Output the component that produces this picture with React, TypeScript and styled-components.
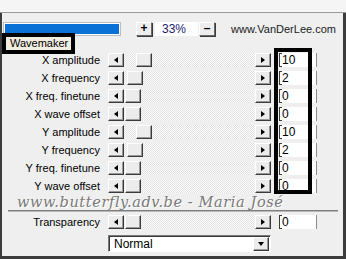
import styled, { createGlobalStyle } from "styled-components";

const GlobalStyle = createGlobalStyle`
  html, body {
    margin: 0;
    padding: 0;
    background: #f0f0f0;
  }
  body {
    font-family: "Liberation Sans", Arial, sans-serif;
    font-size: 11px;
    color: #000;
  }
`;

type Row = { label: string; value: string; thumb: number };

const rows: Row[] = [
  { label: "X amplitude", value: "10", thumb: 12 },
  { label: "X frequency", value: "2", thumb: 3 },
  { label: "X freq. finetune", value: "0", thumb: 1 },
  { label: "X wave offset", value: "0", thumb: 1 },
  { label: "Y amplitude", value: "10", thumb: 12 },
  { label: "Y frequency", value: "2", thumb: 3 },
  { label: "Y freq. finetune", value: "0", thumb: 1 },
  { label: "Y wave offset", value: "0", thumb: 1 },
];

const Slider = ({ thumb }: { thumb: number }) => (
  <SliderBox>
    <RaisedButton>
      <Arrow $dir="left" />
    </RaisedButton>
    <Track>
      <Thumb style={{ left: thumb }} />
    </Track>
    <RaisedButton>
      <Arrow $dir="right" />
    </RaisedButton>
  </SliderBox>
);

const App = () => {
  return (
    <Window>
      <GlobalStyle />
      <TopStrip />
      <Panel>
        <Toolbar>
          <Progress>
            <ProgressFill />
          </Progress>
          <SmallButton $ml={15}>+</SmallButton>
          <ZoomField>33%</ZoomField>
          <SmallButton $ml={1}>–</SmallButton>
          <SiteLink>www.VanDerLee.com</SiteLink>
        </Toolbar>

        <ParamGrid>
          {rows.map((r) => (
            <ParamRow key={r.label}>
              <Label>{r.label}</Label>
              <Slider thumb={r.thumb} />
              <ValueField>{r.value}</ValueField>
            </ParamRow>
          ))}
        </ParamGrid>

        <Signature>www.butterfly.adv.be - Maria José</Signature>
        <Separator />

        <ParamRow>
          <Label>Transparency</Label>
          <Slider thumb={1} />
          <ValueField>0</ValueField>
        </ParamRow>

        <SelectRow>
          <Select>
            <span>Normal</span>
            <SelectButton>
              <Arrow $dir="down" />
            </SelectButton>
          </Select>
        </SelectRow>

        <TabMarker>Wavemaker</TabMarker>
        <ValueMarker />
      </Panel>
    </Window>
  );
};

const Window = styled.div`
  width: 346px;
  height: 259px;
  display: flex;
  flex-direction: column;
  background: #f0f0f0;
  overflow: hidden;
`;

const TopStrip = styled.div`
  height: 12px;
  background: #f5f5f5;
  border-bottom: 1px solid #9a9a9a;
  flex-shrink: 0;
`;

const Panel = styled.div`
  position: relative;
  flex: 1;
  display: flex;
  flex-direction: column;
  border-left: 2px solid #3c3c3c;
  border-right: 3px solid #3c3c3c;
  border-bottom: 3px solid #3c3c3c;
  background: #efefef;
`;

const Toolbar = styled.div`
  height: 15px;
  margin-top: 8px;
  display: flex;
  align-items: center;
`;

const Progress = styled.div`
  width: 114px;
  height: 10px;
  margin-left: 1px;
  border: 1px solid #bdbdbd;
  padding: 1px;
  background: #fff;
  display: flex;
`;

const ProgressFill = styled.div`
  flex: 1;
  background: #0a72d6;
`;

const SmallButton = styled.div<{ $ml: number }>`
  width: 14px;
  height: 12px;
  margin-left: ${({ $ml }) => $ml}px;
  background: #ededed;
  border: 1px solid;
  border-color: #fff #6a6a6a #6a6a6a #fff;
  box-shadow: 1px 1px 0 #3a3a3a;
  font-size: 12px;
  font-weight: bold;
  line-height: 11px;
  text-align: center;
`;

const ZoomField = styled.div`
  width: 36px;
  height: 14px;
  background: #fff;
  padding-left: 7px;
  margin-left: 3px;
  font-size: 12px;
  line-height: 14px;
  color: #1c1c6a;
`;

const SiteLink = styled.div`
  margin-left: 16px;
  font-size: 11px;
  color: #1a1a1a;
`;

const ParamGrid = styled.div`
  margin-top: 15px;
  display: flex;
  flex-direction: column;
`;

const ParamRow = styled.div`
  height: 18px;
  display: grid;
  grid-template-columns: 98px 163px 38px;
  column-gap: 8px;
  align-items: center;
`;

const Label = styled.div`
  text-align: right;
  font-size: 11px;
  white-space: nowrap;
`;

const SliderBox = styled.div`
  height: 14px;
  display: flex;
`;

const RaisedButton = styled.div`
  width: 16px;
  height: 14px;
  box-sizing: border-box;
  background: #ececec;
  border: 1px solid;
  border-color: #fff #3a3a3a #3a3a3a #fff;
  box-shadow: inset -1px -1px 0 #9a9a9a;
  display: flex;
  align-items: center;
  justify-content: center;
`;

const Track = styled.div`
  position: relative;
  flex: 1;
  background: repeating-conic-gradient(#e4e4e4 0 25%, #fbfbfb 0 50%) 0 0 / 2px 2px;
`;

const Thumb = styled(RaisedButton)`
  position: absolute;
  top: 0;
`;

const Arrow = styled.span<{ $dir: "left" | "right" | "down" }>`
  width: 0;
  height: 0;
  border-style: solid;
  border-color: transparent;
  ${({ $dir }) =>
    $dir === "left"
      ? "border-width: 3.5px 4px 3.5px 0; border-right-color: #000;"
      : $dir === "right"
      ? "border-width: 3.5px 0 3.5px 4px; border-left-color: #000;"
      : "border-width: 4px 3.5px 0 3.5px; border-top-color: #000;"}
`;

const ValueField = styled.div`
  position: relative;
  height: 14px;
  box-sizing: border-box;
  background: #fff;
  border-left: 1px solid #3a3a3a;
  border-right: 1px solid #8a8a8a;
  padding-left: 2px;
  font-size: 12px;
  line-height: 14px;

  &::before,
  &::after {
    content: "";
    position: absolute;
    left: 0;
    width: 2px;
    height: 1px;
    background: #3a3a3a;
  }
  &::before {
    top: 0;
  }
  &::after {
    bottom: 0;
  }
`;

const Signature = styled.div`
  height: 15px;
  margin-left: 15px;
  font-family: "DejaVu Serif", "Liberation Serif", serif;
  font-style: italic;
  font-size: 14.5px;
  line-height: 15px;
  letter-spacing: 0.6px;
  color: #7a7a7a;
  text-shadow: 1px 1px 0 #ffffff;
  white-space: nowrap;
`;

const Separator = styled.div`
  height: 1px;
  margin: 0 5px 1px 6px;
  background: #7e7e7e;
  border-bottom: 1px solid #b8b8b8;
`;

const SelectRow = styled.div`
  margin-top: 4px;
  padding-left: 106px;
`;

const Select = styled.div`
  width: 163px;
  height: 17px;
  box-sizing: border-box;
  background: #fff;
  border: 1px solid;
  border-color: #7a7a7a #fff #fff #7a7a7a;
  box-shadow: inset 1px 1px 0 #3a3a3a;
  display: flex;
  align-items: center;
  justify-content: space-between;
  padding: 1px 1px 1px 5px;
  font-size: 12px;
`;

const SelectButton = styled(RaisedButton)`
  height: 14px;
`;

const TabMarker = styled.div`
  position: absolute;
  left: 0;
  top: 20px;
  width: 61px;
  height: 13px;
  border: 4px solid #000;
  background: #f1ede0;
  padding-left: 4px;
  font-size: 11px;
  line-height: 13px;
`;

const ValueMarker = styled.div`
  position: absolute;
  left: 272px;
  top: 35px;
  width: 30px;
  height: 138px;
  border: 4px solid #000;
`;

export default App;
